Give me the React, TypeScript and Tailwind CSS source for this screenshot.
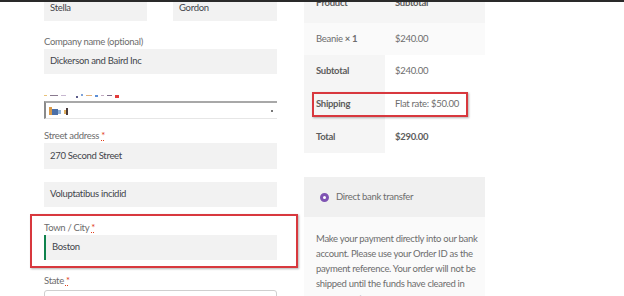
import React from "react";

const font = { fontFamily: "Lato, 'Liberation Sans', sans-serif", letterSpacing: "-0.3px" };

function Label({ children, req }: { children: React.ReactNode; req?: boolean }) {
  return (
    <div className="h-[14px] leading-[14px] text-[9.5px] text-[#6d6d6d]">
      {children}
      {req && <span className="text-[#e2401c] ml-[2px] underline decoration-dotted">*</span>}
    </div>
  );
}

function Input({ value, className = "" }: { value: string; className?: string }) {
  return (
    <div className={"h-[25px] bg-[#f2f2f2] flex items-center pl-[6px] text-[9.5px] text-[#43454b] " + className}>
      {value}
    </div>
  );
}

export default function App() {
  return (
    <div className="w-[624px] h-[296px] bg-white overflow-hidden relative" style={font}>
      <div className="h-[2px] bg-[#2a2a2a] relative z-10" />
      <div className="flex pl-[44px] gap-[27px]">
        {/* Left column */}
        <div className="w-[233px] flex flex-col">
          <div className="flex gap-[26px] -mt-[6px]">
            <Input value="Stella" className="w-[103px] h-[25px]" />
            <Input value="Gordon" className="w-[104px] h-[25px]" />
          </div>
          <div className="mt-[14px]"><Label>Company name (optional)</Label></div>
          <Input value="Dickerson and Baird Inc" />
          <div className="mt-[16px] h-[11px] flex items-center gap-[3px]">
            <span className="w-[3px] h-[1px] bg-[#e8c27a]" />
            <span className="w-[8px] h-[1px] bg-[#8a7a8f]" />
            <span className="w-[5px] h-[1px] bg-[#c7b7d0]" />
            <span className="w-[4px]" />
            <span className="w-[2px] h-[2px] mt-[3px] bg-[#5b5b8a]" />
            <span className="w-[2px] h-[2px] -mt-[2px] bg-[#7fa3d8]" />
            <span className="w-[6px] h-[1px] bg-[#e3b27a]" />
            <span className="w-[3px] h-[2px] mt-[1px] bg-[#5d8fd6]" />
            <span className="w-[3px] h-[1px] bg-[#c1a9c0]" />
            <span className="w-[5px] h-[1px] bg-[#7e6d8a]" />
            <span className="w-[4px] h-[3px] mt-[2px] bg-[#e33b3b]" />
          </div>
          <div className="h-[18px] bg-white border-t-[2px] border-t-[#a8a8a8] border-l-[2px] border-l-[#8a8a8a] border-b border-b-[#e6e6e6] flex items-center pl-[3px] pr-[4px]">
            <span className="w-[3px] h-[8px] bg-[#d99a4a]" />
            <span className="w-[6px] h-[6px] mt-[2px] bg-[#4a6fa8]" />
            <span className="w-[3px] h-[4px] mt-[3px] bg-[#8fb0d6]" />
            <span className="w-[3px]" />
            <span className="w-[2px] h-[4px] mt-[3px] bg-[#e0b060]" />
            <span className="w-[2px] h-[7px] mt-[1px] bg-[#4a3a3a]" />
            <span className="flex-1" />
            <span className="w-[2px] h-[2px] bg-[#777]" />
          </div>
          <div className="mt-[10px]"><Label req>Street address</Label></div>
          <Input value="270 Second Street" className="h-[26px]" />
          <Input value="Voluptatibus incidid" className="mt-[13px]" />
          <div className="mt-[7px] -ml-[14px] w-[268px] border-2 border-[#d8383e] shadow-[1px_1px_2px_rgba(0,0,0,0.3)] pl-[12px] pr-[19px] pt-[5px] pb-[6px]">
            <Label req>Town / City</Label>
            <Input value="Boston" className="border-l-2 border-l-[#0f834d] pl-[4px]" />
          </div>
          <div className="mt-[6px]"><Label req>State</Label></div>
          <div className="mt-[2px] h-[24px] bg-white border border-[#cfcfcf] rounded-[3px]" />
        </div>

        {/* Right column */}
        <div className="w-[181px] flex flex-col text-[9.5px] text-[#6d6d6d]">
          <div className="-mt-[12px] h-[33px] bg-[#f5f5f5] flex font-bold text-[#5d5d5d]">
            <div className="w-[79px] pl-[12px] pt-[6px] leading-[14px]">Product</div>
            <div className="pl-[12px] pt-[6px] leading-[14px]">Subtotal</div>
          </div>
          <div className="h-[32px] bg-[#fafafa] flex items-center">
            <div className="w-[79px] pl-[12px]">Beanie <span className="font-bold">× 1</span></div>
            <div className="pl-[12px]">$240.00</div>
          </div>
          <div className="h-[33px] flex items-center">
            <div className="w-[81px] h-full bg-[#f5f5f5] pl-[12px] flex items-center font-bold text-[#5d5d5d]">Subtotal</div>
            <div className="pl-[10px]">$240.00</div>
          </div>
          <div className="h-[33px] flex items-center relative">
            <div className="w-[81px] h-full bg-[#f5f5f5] pl-[12px] flex items-center font-bold text-[#5d5d5d]">Shipping</div>
            <div className="pl-[10px]">Flat rate: $50.00</div>
            <div className="absolute left-[8px] top-[4px] w-[156px] h-[25px] border-2 border-[#d8383e] shadow-[1px_1px_2px_rgba(0,0,0,0.3)]" />
          </div>
          <div className="h-[32px] flex items-center">
            <div className="w-[81px] h-full bg-[#f5f5f5] pl-[12px] flex items-center font-bold text-[#5d5d5d]">Total</div>
            <div className="pl-[10px] font-bold text-[#5d5d5d]">$290.00</div>
          </div>
          <div className="mt-[24px] h-[40px] bg-[#f0f0f0] flex items-center pl-[16px] gap-[7px]">
            <span className="w-[9px] h-[9px] rounded-full border-[3px] border-[#7f54b3] bg-white" />
            <span>Direct bank transfer</span>
          </div>
          <div className="bg-[#fafafa] pl-[12px] pr-[2px] pt-[14px] pb-[20px] leading-[15px] whitespace-nowrap">
            Make your payment directly into our bank<br />
            account. Please use your Order ID as the<br />
            payment reference. Your order will not be<br />
            shipped until the funds have cleared in<br />
            our account.
          </div>
        </div>
      </div>
    </div>
  );
}
